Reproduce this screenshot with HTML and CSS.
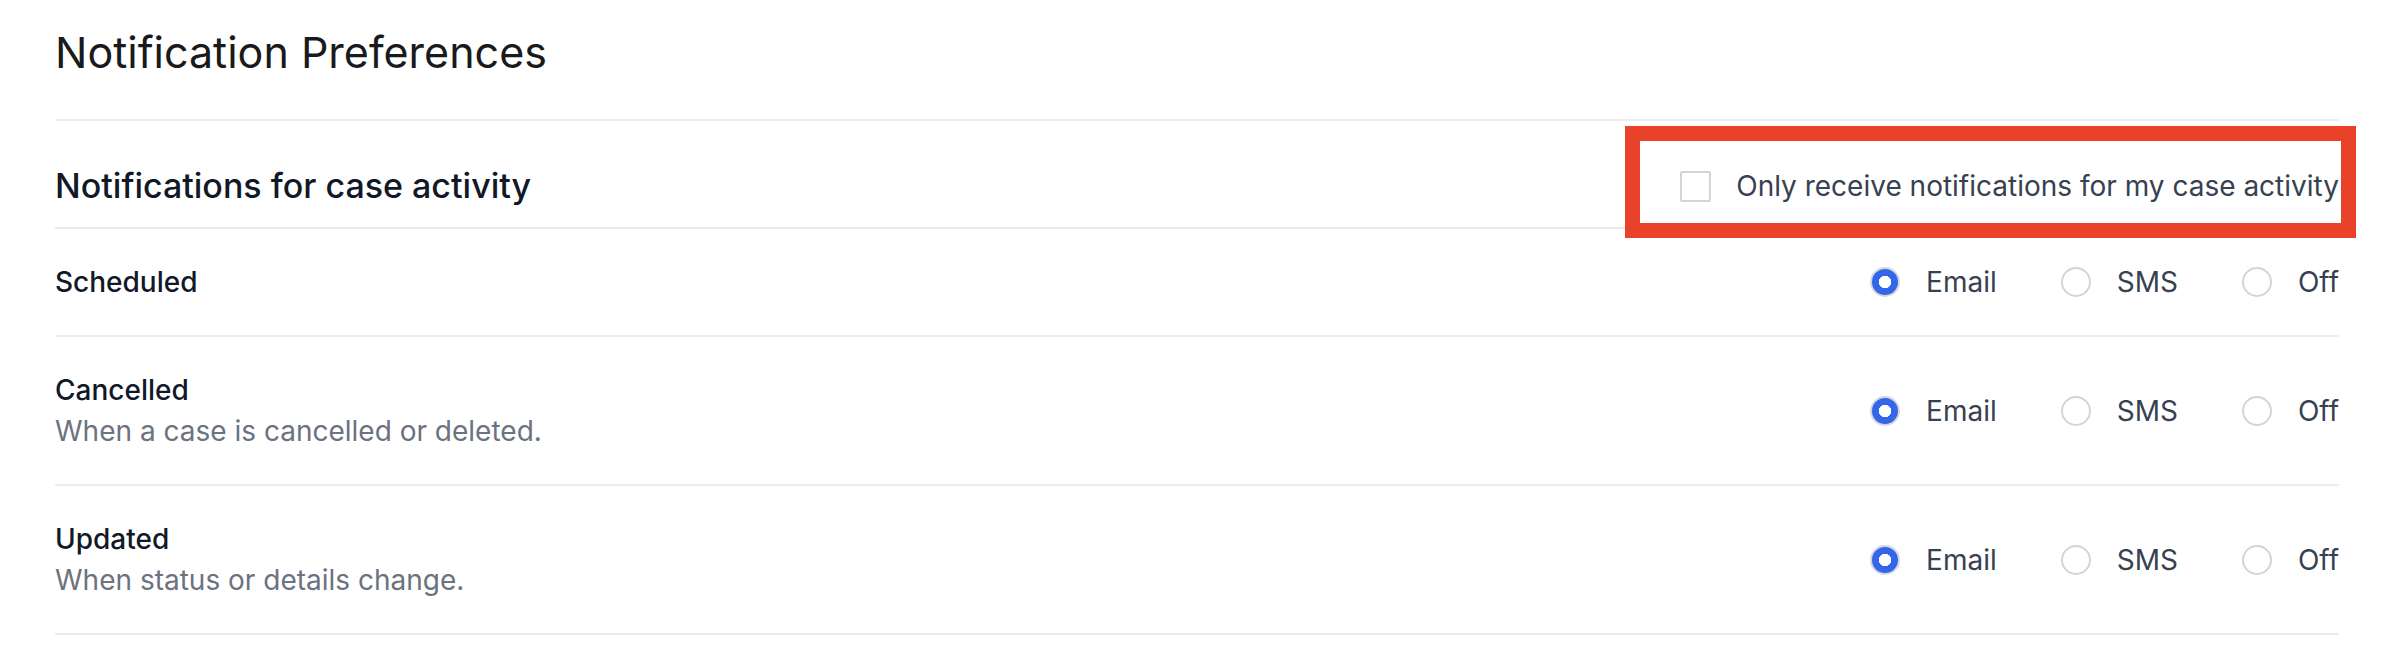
FILE: index.html
```html
<!DOCTYPE html>
<html lang="en">
<head>
    <meta charset="UTF-8">
    <meta name="viewport" content="width=device-width, initial-scale=1.0">
    <title>Notification Preferences</title>
    <link rel="stylesheet" href="styles.css">
</head>
<body>
    <main class="page">
        <h1>Notification Preferences</h1>

        <section class="prefs">
            <header class="prefs-header">
                <h2>Notifications for case activity</h2>
                <label class="only-mine">
                    <input type="checkbox">
                    <span>Only receive notifications for my case activity</span>
                    <span class="highlight"></span>
                </label>
            </header>

            <div class="pref-row">
                <div class="pref-text">
                    <div class="pref-title">Scheduled</div>
                </div>
                <div class="options">
                    <label class="option"><input type="radio" name="scheduled" checked><span>Email</span></label>
                    <label class="option"><input type="radio" name="scheduled"><span>SMS</span></label>
                    <label class="option"><input type="radio" name="scheduled"><span>Off</span></label>
                </div>
            </div>

            <div class="pref-row">
                <div class="pref-text">
                    <div class="pref-title">Cancelled</div>
                    <div class="pref-desc">When a case is cancelled or deleted.</div>
                </div>
                <div class="options">
                    <label class="option"><input type="radio" name="cancelled" checked><span>Email</span></label>
                    <label class="option"><input type="radio" name="cancelled"><span>SMS</span></label>
                    <label class="option"><input type="radio" name="cancelled"><span>Off</span></label>
                </div>
            </div>

            <div class="pref-row">
                <div class="pref-text">
                    <div class="pref-title">Updated</div>
                    <div class="pref-desc">When status or details change.</div>
                </div>
                <div class="options">
                    <label class="option"><input type="radio" name="updated" checked><span>Email</span></label>
                    <label class="option"><input type="radio" name="updated"><span>SMS</span></label>
                    <label class="option"><input type="radio" name="updated"><span>Off</span></label>
                </div>
            </div>
        </section>
    </main>
</body>
</html>
```

FILE: styles.css
```css
body {
    margin: 0;
    padding: 0;
    font-family: Inter, "Noto Sans", sans-serif;
    background: #fff;
    color: #111827;
}

.page {
    padding: 26px 57px 0 55px;
}

h1 {
    margin: 0 0 41px;
    font-size: 43px;
    font-weight: 400;
    line-height: 52px;
    color: #1a1a1c;
}

.prefs-header {
    display: flex;
    justify-content: space-between;
    align-items: center;
    padding: 44px 0 20px;
    border-top: 2px solid #ececf0;
    border-bottom: 2px solid #ececf0;
}

h2 {
    margin: 0;
    font-size: 34px;
    font-weight: 500;
    line-height: 42px;
    color: #111827;
}

.only-mine {
    position: relative;
    display: flex;
    align-items: center;
    gap: 25px;
    font-size: 28px;
    line-height: 42px;
    color: #374151;
}

.only-mine input {
    appearance: none;
    margin: 0;
    width: 31px;
    height: 31px;
    border: 2px solid #d1d5db;
    border-radius: 2px;
    background: #fff;
}

/* red annotation frame drawn over the header */
.only-mine .highlight {
    position: absolute;
    top: -39px;
    bottom: -31px;
    left: -55px;
    right: -17px;
    border: 15px solid #e8432a;
    pointer-events: none;
}

.pref-row {
    display: flex;
    justify-content: space-between;
    align-items: center;
    padding: 32px 0;
    border-bottom: 2px solid #ececf0;
}

.pref-title {
    font-size: 28px;
    font-weight: 500;
    line-height: 42px;
    color: #111827;
}

.pref-desc {
    font-size: 28px;
    line-height: 41px;
    color: #6b7280;
}

.options {
    display: flex;
    gap: 64px;
}

.option {
    display: flex;
    align-items: center;
    gap: 26px;
    font-size: 28px;
    line-height: 42px;
    color: #374151;
}

.option input {
    appearance: none;
    margin: 0;
    width: 30px;
    height: 30px;
    border: 2px solid #d1d5db;
    border-radius: 50%;
    background: #fff;
}

.option input:checked {
    background: radial-gradient(circle, #fff 0 6px, #3366e8 6.5px);
    border-color: #d4d7de;
}
```
